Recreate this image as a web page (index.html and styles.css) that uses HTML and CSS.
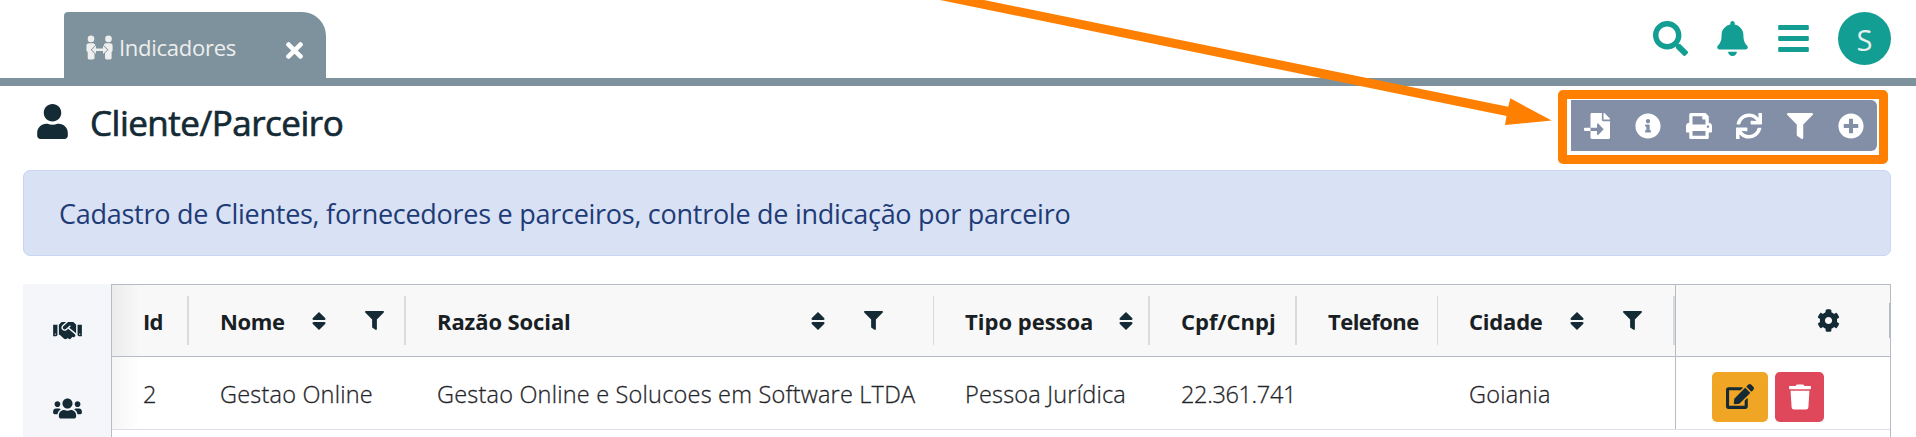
FILE: index.html
```html
<!DOCTYPE html>
<html lang="pt-BR">
<head>
<meta charset="utf-8">
<title>Cliente/Parceiro</title>
<link rel="stylesheet" href="styles.css">
</head>
<body>
<svg class="defs" width="0" height="0">
  <symbol id="sort" viewBox="0 0 14 18"><path d="M7 0 L13.4 6.2 Q14 8 12.4 8 H1.600 Q0 8 .6 6.200Z M7 18 L.6 11.800 Q0 10 1.600 10 H12.400 Q14 10 13.400 11.800Z"/></symbol>
  <symbol id="filter" viewBox="0 0 512 512"><path d="M487.976 0H24.028C2.71 0-8.047 25.866 7.058 40.971L192 225.941V432c0 7.831 3.821 15.17 10.237 19.662l80 55.98C298.02 518.69 320 507.493 320 487.98V225.941l184.947-184.97C520.021 25.896 509.338 0 487.976 0z"/></symbol>
</svg>
<header class="topbar">
  <div class="tab">
    <svg class="tab-icon" viewBox="0 0 27 25"><circle cx="5" cy="3.900" r="3.300"/><circle cx="22.500" cy="3.900" r="3.300"/><path d="M3 8.300H7Q9.500 8.500 9.500 11V16L8.500 18V23Q8.500 24.400 7 24.400H3Q1.700 24.400 1.700 23V17Q.4 16.600 .4 15V11Q.4 8.300 3 8.300ZM20 8.300H24Q26.600 8.300 26.600 11V15Q26.600 16.600 25.600 17V23Q25.600 24.400 24.200 24.400H20.500Q19 24.400 19 23V18L17.800 16V11Q17.800 8.300 20 8.300Z"/><path class="tab-arrow" d="M5.800 14.700L10 10.500V13.400H17V10.500L21.300 14.700L17 19V16H10V19Z"/></svg>
    <span class="tab-label">Indicadores</span>
    <svg class="tab-close" viewBox="0 80 352 352"><path d="M242.720 256l100.070-100.070c12.280-12.280 12.280-32.190 0-44.480l-22.240-22.240c-12.280-12.280-32.190-12.280-44.480 0L176 189.280 75.930 89.210c-12.280-12.280-32.190-12.280-44.480 0L9.210 111.450c-12.280 12.280-12.280 32.190 0 44.480L109.280 256 9.210 356.070c-12.280 12.280-12.280 32.190 0 44.480l22.240 22.240c12.280 12.280 32.200 12.280 44.480 0L176 322.720l100.070 100.070c12.280 12.280 32.200 12.280 44.480 0l22.240-22.240c12.280-12.280 12.280-32.190 0-44.480L242.720 256z"/></svg>
  </div>
  <div class="top-actions">
    <svg class="i-search" viewBox="0 0 512 512"><path d="M505 442.700L405.300 343c-4.500-4.500-10.600-7-17-7H372c27.600-35.300 44-79.700 44-128C416 93.100 322.900 0 208 0S0 93.100 0 208s93.100 208 208 208c48.300 0 92.700-16.400 128-44v16.300c0 6.400 2.500 12.500 7 17l99.700 99.700c9.400 9.400 24.600 9.400 33.900 0l28.300-28.300c9.400-9.400 9.400-24.600.1-34zM208 336c-70.700 0-128-57.200-128-128 0-70.700 57.200-128 128-128 70.700 0 128 57.200 128 128 0 70.700-57.200 128-128 128z"/></svg>
    <svg class="i-bell" viewBox="0 0 448 512"><path d="M224 512c35.320 0 63.970-28.650 63.970-64H160.030c0 35.350 28.650 64 63.970 64zm215.390-149.710c-19.320-20.760-55.470-51.990-55.470-154.290 0-77.700-54.480-139.900-127.940-155.160V32c0-17.670-14.320-32-31.980-32s-31.980 14.330-31.980 32v20.840C118.560 68.100 64.080 130.300 64.080 208c0 102.300-36.150 133.530-55.470 154.290-6 6.450-8.660 14.160-8.610 21.710.11 16.400 12.980 32 32.100 32h383.800c19.120 0 32-15.600 32.100-32 .05-7.550-2.610-15.270-8.610-21.710z"/></svg>
    <svg class="i-bars" viewBox="0 0 448 512"><rect y="60" width="448" height="72" rx="14"/><rect y="220" width="448" height="72" rx="14"/><rect y="380" width="448" height="72" rx="14"/></svg>
    <div class="avatar">S</div>
  </div>
</header>
<section class="page-head">
  <svg class="i-user" viewBox="0 0 448 512"><path d="M224 256c70.700 0 128-57.300 128-128S294.700 0 224 0 96 57.300 96 128s57.300 128 128 128zm89.600 32h-16.700c-22.200 10.200-46.900 16-72.900 16s-50.600-5.800-72.900-16h-16.700C60.200 288 0 348.200 0 422.400V464c0 26.500 21.500 48 48 48h352c26.500 0 48-21.500 48-48v-41.600c0-74.200-60.200-134.400-134.400-134.400z"/></svg>
  <h1>Cliente/Parceiro</h1>
  <div class="highlight">
    <div class="toolbar">
      <svg viewBox="0 0 512 512"><path d="M16 288c-8.800 0-16 7.200-16 16v32c0 8.800 7.200 16 16 16h112v-64zm489-183L407.100 7c-4.500-4.500-10.600-7-17-7H384v128h128v-6.100c0-6.300-2.500-12.400-7-16.900zm-153 31V0H152c-13.300 0-24 10.700-24 24v264h128v-65.200c0-14.300 17.300-21.400 27.400-11.300L379 308c6.600 6.700 6.600 17.400 0 24l-95.700 96.400c-10.100 10.100-27.400 3-27.400-11.300V352H128v136c0 13.300 10.700 24 24 24h336c13.300 0 24-10.700 24-24V160H376c-13.200 0-24-10.800-24-24z"/></svg>
      <svg viewBox="0 0 512 512"><path d="M256 8C119.043 8 8 119.083 8 256c0 136.997 111.043 248 248 248s248-111.003 248-248C504 119.083 392.957 8 256 8zm0 110c23.196 0 42 18.804 42 42s-18.804 42-42 42-42-18.804-42-42 18.804-42 42-42zm56 254c0 6.627-5.373 12-12 12h-88c-6.627 0-12-5.373-12-12v-24c0-6.627 5.373-12 12-12h12v-64h-12c-6.627 0-12-5.373-12-12v-24c0-6.627 5.373-12 12-12h64c6.627 0 12 5.373 12 12v100h12c6.627 0 12 5.373 12 12v24z"/></svg>
      <svg viewBox="0 0 512 512"><path d="M448 192V77.250c0-8.490-3.370-16.620-9.370-22.630L393.370 9.370c-6-6-14.140-9.370-22.630-9.370H96C78.330 0 64 14.330 64 32v160c-35.350 0-64 28.650-64 64v112c0 8.840 7.160 16 16 16h48v96c0 17.670 14.330 32 32 32h320c17.670 0 32-14.330 32-32v-96h48c8.840 0 16-7.160 16-16V256c0-35.350-28.650-64-64-64zm-64 256H128v-96h256v96zm0-224H128V64h192v48c0 8.840 7.160 16 16 16h48v96zm48 72c-13.250 0-24-10.750-24-24 0-13.260 10.750-24 24-24s24 10.740 24 24c0 13.250-10.750 24-24 24z"/></svg>
      <svg viewBox="0 0 512 512"><path d="M440.650 12.570l4 82.770A247.160 247.160 0 0 0 255.830 8C134.730 8 33.910 94.920 12.290 209.820A12 12 0 0 0 24.090 224h49.050a12 12 0 0 0 11.670-9.260 175.910 175.910 0 0 1 317-56.940l-101.460-4.860a12 12 0 0 0-12.570 12v47.410a12 12 0 0 0 12 12H500a12 12 0 0 0 12-12V12a12 12 0 0 0-12-12h-47.370a12 12 0 0 0-11.980 12.570zM255.830 432a175.610 175.610 0 0 1-146-77.800l101.800 4.870a12 12 0 0 0 12.570-12v-47.400a12 12 0 0 0-12-12H12a12 12 0 0 0-12 12V500a12 12 0 0 0 12 12h47.350a12 12 0 0 0 12-12.600l-4.150-82.570A247.170 247.170 0 0 0 255.830 504c121.110 0 221.930-86.920 243.550-201.820a12 12 0 0 0-11.800-14.180h-49.050a12 12 0 0 0-11.670 9.260A175.860 175.860 0 0 1 255.830 432z"/></svg>
      <svg><use href="#filter"/></svg>
      <svg viewBox="0 0 512 512"><path d="M256 8C119 8 8 119 8 256s111 248 248 248 248-111 248-248S393 8 256 8zm144 276c0 6.600-5.400 12-12 12h-92v92c0 6.600-5.400 12-12 12h-56c-6.600 0-12-5.400-12-12v-92h-92c-6.600 0-12-5.400-12-12v-56c0-6.600 5.400-12 12-12h92v-92c0-6.600 5.400-12 12-12h56c6.600 0 12 5.400 12 12v92h92c6.600 0 12 5.400 12 12v56z"/></svg>
    </div>
  </div>
</section>
<div class="alert"><span>Cadastro de Clientes, fornecedores e parceiros, controle de indicação por parceiro</span></div>
<main class="content">
  <nav class="side">
    <svg viewBox="0 0 640 512"><path d="M434.700 64h-85.900c-8 0-15.700 3-21.600 8.400l-98.300 90c-.1.1-.2.3-.3.4-16.600 15.600-16.300 40.500-2.100 56 12.700 13.900 39.400 17.600 56.100 2.700.1-.1.3-.1.4-.2l79.900-73.200c6.500-5.900 16.700-5.500 22.600 1 6 6.500 5.500 16.600-1 22.600l-26.100 23.900L504 313.800c2.900 2.400 5.500 5 7.900 7.700V128l-54.600-54.600c-5.900-6-14.100-9.400-22.600-9.400zM544 128.200v223.900c0 17.700 14.300 32 32 32h64V128.200h-96zm48 223.900c-8.800 0-16-7.200-16-16s7.200-16 16-16 16 7.200 16 16-7.200 16-16 16zM0 384h64c17.700 0 32-14.300 32-32V128.200H0V384zm48-63.900c8.800 0 16 7.200 16 16s-7.200 16-16 16-16-7.200-16-16c0-8.900 7.200-16 16-16zm435.900 18.600L334.600 217.500l-30 27.500c-29.700 27.100-75.200 24.500-101.700-4.400-26.900-29.400-24.800-74.900 4.400-101.700L289.100 64h-83.800c-8.500 0-16.600 3.400-22.600 9.400L128 128v223.900h18.300l90.500 81.900c27.400 22.300 67.700 18.100 90-9.300l.2-.2 17.900 15.500c15.900 13 39.400 10.500 52.300-5.400l31.400-38.600 5.400 4.400c13.700 11.100 33.900 9.100 45-4.700l9.500-11.700c11.200-13.800 9.100-33.900-4.600-45.100z"/></svg>
    <svg viewBox="0 0 640 512"><path d="M96 224c35.300 0 64-28.700 64-64s-28.700-64-64-64-64 28.700-64 64 28.700 64 64 64zm448 0c35.300 0 64-28.700 64-64s-28.700-64-64-64-64 28.700-64 64 28.700 64 64 64zm32 32h-64c-17.600 0-33.500 7.100-45.100 18.600 40.300 22.100 68.900 62 75.100 109.400h66c17.700 0 32-14.300 32-32v-32c0-35.300-28.700-64-64-64zm-256 0c61.900 0 112-50.100 112-112S381.900 32 320 32 208 82.100 208 144s50.100 112 112 112zm76.800 32h-8.300c-20.800 10-43.900 16-68.500 16s-47.600-6-68.500-16h-8.300C179.600 288 128 339.600 128 403.200V432c0 26.500 21.500 48 48 48h288c26.500 0 48-21.500 48-48v-28.800c0-63.600-51.600-115.200-115.200-115.200zm-223.700-13.400C161.500 263.100 145.600 256 128 256H64c-35.300 0-64 28.700-64 64v32c0 17.700 14.300 32 32 32h65.900c6.300-47.400 34.900-87.300 75.200-109.400z"/></svg>
  </nav>
  <div class="grid">
    <div class="row head">
      <div class="cell"><span>Id</span></div>
      <div class="cell"><span class="t-nome">Nome</span><svg class="sort"><use href="#sort"/></svg><svg class="filter"><use href="#filter"/></svg></div>
      <div class="cell wide"><span class="t-razao">Razão Social</span><svg class="sort"><use href="#sort"/></svg><svg class="filter"><use href="#filter"/></svg></div>
      <div class="cell tipo"><span class="t-tipo">Tipo pessoa</span><svg class="sort"><use href="#sort"/></svg></div>
      <div class="cell"><span class="t-cpf">Cpf/Cnpj</span></div>
      <div class="cell tel"><span class="t-tel">Telefone</span></div>
      <div class="cell cid"><span class="t-cid">Cidade</span><svg class="sort"><use href="#sort"/></svg><svg class="filter"><use href="#filter"/></svg></div>
      <div class="cell fixed"><svg class="cog" viewBox="0 0 512 512"><path d="M487.400 315.700l-42.600-24.600c4.300-23.200 4.300-47 0-70.200l42.600-24.600c4.900-2.800 7.100-8.600 5.500-14-11.100-35.600-30-67.800-54.700-94.600-3.800-4.100-10-5.100-14.800-2.300L380.800 110c-17.900-15.400-38.500-27.300-60.800-35.100V25.800c0-5.600-3.900-10.500-9.400-11.700-36.700-8.200-74.300-7.800-109.200 0-5.500 1.200-9.400 6.100-9.400 11.700V75c-22.200 7.900-42.800 19.800-60.800 35.100L88.700 85.500c-4.900-2.800-11-1.900-14.800 2.300-24.700 26.700-43.600 58.900-54.700 94.600-1.700 5.400.6 11.200 5.500 14L67.300 221c-4.300 23.200-4.300 47 0 70.200l-42.600 24.600c-4.900 2.800-7.100 8.600-5.500 14 11.100 35.600 30 67.800 54.700 94.600 3.800 4.100 10 5.100 14.800 2.300l42.600-24.600c17.900 15.400 38.500 27.300 60.800 35.100v49.200c0 5.600 3.900 10.500 9.400 11.700 36.700 8.200 74.300 7.800 109.200 0 5.500-1.200 9.400-6.100 9.400-11.700v-49.200c22.200-7.900 42.800-19.800 60.800-35.100l42.600 24.600c4.900 2.800 11 1.900 14.800-2.300 24.700-26.700 43.600-58.900 54.700-94.600 1.500-5.500-.7-11.300-5.600-14.100zM256 336c-44.100 0-80-35.900-80-80s35.900-80 80-80 80 35.900 80 80-35.900 80-80 80z"/></svg></div>
    </div>
    <div class="row body">
      <div class="cell"><span>2</span></div>
      <div class="cell"><span>Gestao Online</span></div>
      <div class="cell"><span>Gestao Online e Solucoes em Software LTDA</span></div>
      <div class="cell"><span>Pessoa Jurídica</span></div>
      <div class="cell"><span class="t-num">22.361.741</span></div>
      <div class="cell"></div>
      <div class="cell"><span>Goiania</span></div>
      <div class="cell fixed">
        <div class="btn edit"><svg viewBox="0 0 576 512"><path d="M402.600 83.200l90.200 90.200c3.800 3.800 3.800 10 0 13.800L274.400 405.600l-92.800 10.300c-12.400 1.400-22.900-9.100-21.500-21.500l10.300-92.800L388.800 83.200c3.800-3.800 10-3.800 13.800 0zm162-22.900l-48.800-48.800c-15.200-15.200-39.900-15.200-55.200 0l-35.400 35.400c-3.800 3.800-3.800 10 0 13.800l90.200 90.200c3.800 3.800 10 3.800 13.800 0l35.400-35.400c15.200-15.300 15.200-40 0-55.200zM384 346.200V448H64V128h229.800c3.200 0 6.200-1.300 8.500-3.500l40-40c7.600-7.600 2.200-20.500-8.500-20.500H48C21.500 64 0 85.500 0 112v352c0 26.500 21.500 48 48 48h352c26.500 0 48-21.500 48-48V306.200c0-10.700-12.900-16-20.500-8.500l-40 40c-2.200 2.300-3.500 5.300-3.500 8.500z"/></svg></div>
        <div class="btn del"><svg viewBox="0 0 448 512"><path d="M432 32H312l-9.400-18.700A24 24 0 0 0 281.100 0H166.800a23.720 23.720 0 0 0-21.400 13.300L136 32H16A16 16 0 0 0 0 48v32a16 16 0 0 0 16 16h416a16 16 0 0 0 16-16V48a16 16 0 0 0-16-16zM53.200 467a48 48 0 0 0 47.900 45h245.800a48 48 0 0 0 47.900-45L416 128H32z"/></svg></div>
      </div>
    </div>
  </div>
</main>
<svg class="pointer" viewBox="0 0 1916 437"><path d="M940 0H984L1508.200 106.800L1510.300 98.300L1551.700 120.600L1505 125L1506.500 116Z"/></svg>
</body>
</html>
```
FILE: styles.css
```css
* { box-sizing: border-box; }
body {
  margin: 0;
  height: 437px;
  overflow: hidden;
  position: relative;
  background: #fff;
  color: #142a35;
  font-family: "Open Sans", "Noto Sans", sans-serif;
}
svg { display: block; flex: none; fill: currentColor; }
span, h1 { white-space: nowrap; }
.defs { position: absolute; }

.topbar {
  height: 86px;
  border-bottom: 8px solid #7d929c;
  padding: 12px 25px 0 64px;
  display: flex;
  justify-content: space-between;
}
.tab {
  width: 262px;
  height: 66px;
  padding: 0 23px 0 22px;
  background: #7d929c;
  border-radius: 4px 24px 0 0;
  color: #eee;
  display: flex;
  align-items: center;
}
.tab-icon { width: 27px; height: 25px; margin-top: 5px; }
.tab-arrow { stroke: #7d929c; stroke-width: 1.5; paint-order: stroke; }
.tab-label { margin: 4px 0 0 6px; font-size: 22px; letter-spacing: -0.27px; }
.tab-close { width: 17px; height: 17px; margin: 11px 0 0 auto; color: #fff; }
.top-actions { display: flex; align-items: flex-start; color: #139e94; }
.i-search { width: 35px; height: 35px; margin: 9px 29px 0 0; }
.i-bell { width: 31px; height: 35px; margin: 9px 30px 0 0; }
.i-bars { width: 31px; height: 35px; margin: 9px 29px 0 0; }
.avatar {
  width: 53px;
  height: 53px;
  border-radius: 50%;
  background: #139e94;
  color: #e8f0ee;
  font-size: 29px;
  line-height: 55px;
  text-align: center;
}

.page-head { height: 84px; padding: 4px 28px 0 37px; display: flex; align-items: flex-start; }
.i-user { width: 31px; height: 35px; margin-top: 14px; }
h1 {
  margin: 10px 0 0 22px;
  font-size: 35px;
  line-height: 45px;
  font-weight: 400;
  letter-spacing: -0.5px;
  -webkit-text-stroke: 0.7px currentColor;
}
.highlight {
  width: 330px;
  height: 74px;
  margin-left: auto;
  border: 9px solid #ff8000;
  border-radius: 5px;
  padding: 1px 2px 0 4px;
}
.toolbar {
  height: 51px;
  padding: 0 13px;
  background: #828fa6;
  border-radius: 0 6px 6px 0;
  color: #fff;
  display: flex;
  justify-content: space-between;
  align-items: center;
}
.toolbar svg { width: 26px; height: 26px; }

.alert {
  margin: 0 25px 0 23px;
  height: 86px;
  padding-left: 35px;
  background: #d8e2f4;
  border: 1px solid #c9d6f3;
  border-radius: 7px;
  color: #1f3b77;
  font-size: 27px;
  line-height: 86px;
  letter-spacing: -0.27px;
}

.content { margin: 28px 25px 0 23px; height: 153px; display: flex; }
.side {
  width: 88px;
  background: #f5f6fa;
  padding: 35px 0 0 30px;
  display: flex;
  flex-direction: column;
  gap: 55px;
}
.side svg { width: 29px; height: 23px; }
.grid {
  flex: 1;
  border: solid #b6bcc4;
  border-width: 1px 1px 0;
}
.row { display: grid; grid-template-columns: 77px 217px 528px 216px 147px 141px 237px 1fr; }
.cell { display: flex; align-items: center; padding-left: 31px; min-width: 0; }
.head {
  height: 72px;
  border-bottom: 1px solid #b6bcc4;
  background: linear-gradient(90deg, #ececec, #f8f8f8 28px);
  font-size: 22px;
  font-weight: 700;
  color: #182024;
  letter-spacing: -0.7px;
}
.head .cell { background: linear-gradient(#d8dbe0, #d8dbe0) right 11px / 2px 49px no-repeat; }
.head .cell.wide, .head .cell.tel { background-size: 1px 49px; }
.head svg { color: #142a35; }
.t-nome { letter-spacing: -0.4px; }
.t-razao { letter-spacing: -0.1px; }
.t-tipo, .t-cpf { letter-spacing: 0; }
.t-tel { letter-spacing: -0.55px; }
.t-cid { letter-spacing: -0.2px; }
.sort { width: 14px; height: 18px; margin-left: auto; }
.filter { width: 19px; height: 19px; margin: 0 22px 0 39px; }
.wide .filter { margin-right: 51px; }
.cid .filter { margin-right: 33px; }
.tipo .sort { margin-right: 17px; }
.row .fixed { border-left: 1px solid #b6bcc4; }
.head .fixed { background: linear-gradient(#b6bcc4, #b6bcc4) right 18px / 1px 35px no-repeat; }
.cog { width: 23px; height: 23px; margin: -1px 0 0 110px; }
.body {
  height: 73px;
  border-bottom: 1px solid #dddfea;
  background: linear-gradient(90deg, #f5f5f5, #fff 28px);
  color: #1f2529;
  font-size: 23.500px;
  font-weight: 300;
  letter-spacing: 0.2px;
  -webkit-text-stroke: 0.3px currentColor;
}
.body span { margin-top: 1px; }
.t-num { letter-spacing: -0.35px; }
.btn {
  height: 50px;
  margin-top: 7px;
  border-radius: 5px;
  display: flex;
  align-items: center;
  justify-content: center;
}
.edit { width: 56px; background: #f0a524; color: #142a35; margin-left: 5px; }
.del { width: 49px; margin-left: 7px; background: #df475a; color: #fff; }
.edit svg { width: 28px; height: 25px; }
.del svg { width: 22px; height: 26px; }

.pointer { position: absolute; left: 0; top: 0; width: 1916px; height: 437px; color: #ff8000; pointer-events: none; }
```
